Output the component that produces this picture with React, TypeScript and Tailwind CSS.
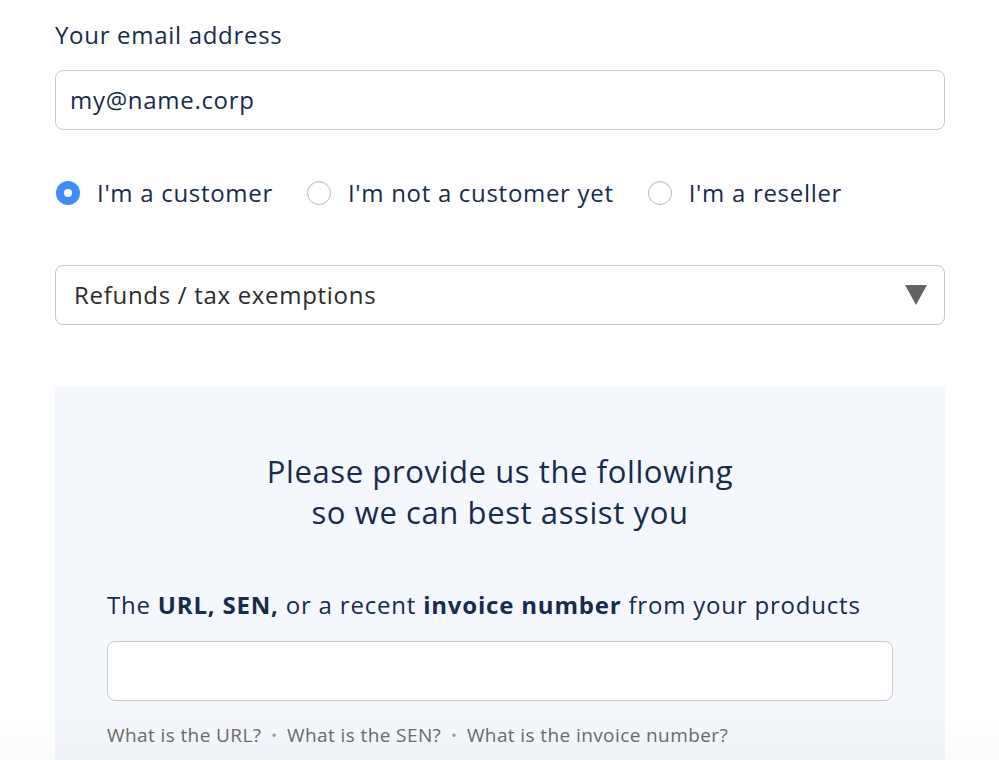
import { useState } from 'react';

const options = [
  { id: 'customer', label: "I'm a customer" },
  { id: 'prospect', label: "I'm not a customer yet" },
  { id: 'reseller', label: "I'm a reseller" },
];

function Radio({ checked }: { checked: boolean }) {
  if (checked) {
    return (
      <span className="flex h-[24px] w-[24px] items-center justify-center rounded-full bg-[#3b8ff6]">
        <span className="h-[8px] w-[8px] rounded-full bg-white" />
      </span>
    );
  }
  return (
    <span className="h-[24px] w-[24px] rounded-full border border-[#b9b9b9] bg-white shadow-[inset_0_1px_1px_rgba(0,0,0,0.08)]" />
  );
}

export default function App() {
  const [kind, setKind] = useState('customer');

  return (
    <div className="relative min-h-[760px] overflow-hidden bg-white font-['Open_Sans',sans-serif] text-[#172b4d] tracking-[0.7px]">
      <div className="w-[890px] ml-[55px] pt-[18px]">
        <label className="block text-[24px] leading-[34px]">Your email address</label>

        <div className="mt-[18px] flex h-[60px] items-center rounded-[8px] border border-[#c8cbd1] px-[14px] text-[24px]">
          my@name.corp
        </div>

        <div className="mt-[46px] ml-[1px] flex items-center">
          {options.map((o) => (
            <button
              key={o.id}
              onClick={() => setKind(o.id)}
              className="mr-[34px] flex items-center gap-[17px]"
            >
              <Radio checked={kind === o.id} />
              <span className="text-[24px] leading-[34px]">{o.label}</span>
            </button>
          ))}
        </div>

        <div className="mt-[55px] flex h-[60px] items-center justify-between rounded-[8px] border border-[#c3c7d0] pl-[18px] pr-[16px]">
          <span className="text-[24px] text-[#2b2b2b]">Refunds / tax exemptions</span>
          <svg width="24" height="22" viewBox="0 0 24 22">
            <polygon points="1,1 23,1 12,21" fill="#636363" />
          </svg>
        </div>

        <div className="mt-[62px] bg-[#f4f7fc] px-[52px] pt-[64px] pb-[40px]">
          <h2 className="text-center text-[31px] leading-[41px] tracking-[0.6px]">
            Please provide us the following
            <br />
            so we can best assist you
          </h2>

          <p className="mt-[55px] text-[24px] leading-[34px] tracking-[0.8px]">
            The <b className="font-bold">URL, SEN,</b> or a recent <b className="font-bold">invoice number</b> from your products
          </p>

          <div className="mt-[19px] h-[60px] rounded-[8px] border border-[#c8c8c8] bg-white" />

          <div className="mt-[20px] flex items-center gap-[10px] text-[19px] tracking-[0.4px] text-[#6b6b6b]">
            <span>What is the URL?</span>
            <span className="text-[#9a9a9a] text-[14px]">•</span>
            <span>What is the SEN?</span>
            <span className="text-[#9a9a9a] text-[14px]">•</span>
            <span>What is the invoice number?</span>
          </div>
        </div>
      </div>

      <div className="pointer-events-none absolute bottom-0 left-0 right-0 h-[80px] bg-gradient-to-b from-transparent to-[rgba(0,0,0,0.03)]" />
    </div>
  );
}
